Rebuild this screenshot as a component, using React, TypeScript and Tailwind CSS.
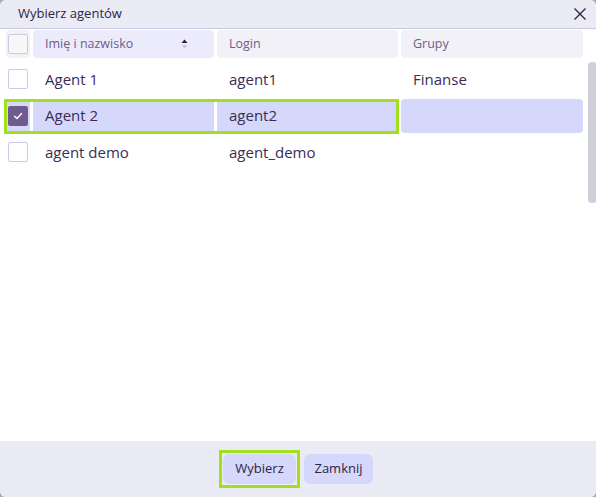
interface Agent {
  name: string;
  login: string;
  groups: string;
  selected: boolean;
}

const agents: Agent[] = [
  { name: "Agent 1", login: "agent1", groups: "Finanse", selected: false },
  { name: "Agent 2", login: "agent2", groups: "", selected: true },
  { name: "agent demo", login: "agent_demo", groups: "", selected: false },
];

function Checkbox({ checked }: { checked: boolean }) {
  return checked ? (
    <div className="w-5 h-5 rounded-[2px] bg-[#6f5b8c] flex items-center justify-center">
      <svg width="12" height="12" viewBox="0 0 12 12" fill="none">
        <path d="M2.5 6.2 L5 8.5 L9.5 3.5" stroke="#fff" strokeWidth="1.4" strokeLinecap="round" strokeLinejoin="round" />
      </svg>
    </div>
  ) : (
    <div className="w-5 h-5 rounded-[2px] border border-[#cdcbe3] bg-white" />
  );
}

export default function App() {
  return (
    <div className="w-[596px] h-[497px] bg-[#a9a9b3] font-['Open_Sans',sans-serif]">
      <div className="w-full h-full rounded-[6px] overflow-hidden bg-white flex flex-col">
        {/* Title bar */}
        <div className="h-[29px] shrink-0 bg-[#ebebf6] border-b border-[#c9c8e2] flex items-center justify-between pl-[18px] pr-[6px]">
          <span className="text-[13px] text-[#2e2448]">Wybierz agentów</span>
          <button className="w-5 h-5 flex items-center justify-center text-[#2e2448]" aria-label="Zamknij">
            <svg width="14" height="14" viewBox="0 0 14 14" fill="none">
              <path d="M1.5 1.5 L12.5 12.5 M12.5 1.5 L1.5 12.5" stroke="currentColor" strokeWidth="1.4" />
            </svg>
          </button>
        </div>

        {/* Table */}
        <div className="flex-1 flex relative">
          <div className="flex-1 pl-[6px] pt-[1px]">
            <div className="grid grid-cols-[24px_181px_181px_182px] gap-x-[3px] h-[28px]">
              <div className="rounded-[4px] bg-[#f2f1f6] flex items-center justify-center">
                <div className="w-5 h-5 rounded-[2px] border border-[#cdcbe3] bg-[#f7f7f9]" />
              </div>
              <div className="rounded-[4px] bg-[#ebebfb] flex items-center justify-between pl-3 pr-[26px] text-[12.5px] font-medium text-[#6d5e88]">
                <span>Imię i nazwisko</span>
                <svg width="7" height="10" viewBox="0 0 7 10">
                  <path d="M3.5 0.5 L6.5 4 L0.5 4 Z" fill="#2b1d49" />
                  <path d="M0.5 6 L6.5 6 L3.5 9.5 Z" fill="#c9c8d6" />
                </svg>
              </div>
              <div className="rounded-[4px] bg-[#f2f1f7] flex items-center pl-3 text-[12.5px] font-medium text-[#6d5e88]">
                Login
              </div>
              <div className="rounded-[4px] bg-[#f2f1f7] flex items-center pl-3 text-[12.5px] font-medium text-[#6d5e88]">
                Grupy
              </div>
            </div>

            <div className="mt-[4px] flex flex-col gap-[2.5px]">
              {agents.map((a) => (
                <div key={a.login} className="relative grid grid-cols-[24px_181px_181px_182px] gap-x-[3px] h-[34px] text-[15px] text-[#3a2c57]">
                  <div className={`rounded-[4px] flex items-center justify-center ${a.selected ? "bg-[#d5d8fa]" : ""}`}>
                    <Checkbox checked={a.selected} />
                  </div>
                  <div className={`rounded-[4px] flex items-center pl-3 ${a.selected ? "bg-[#d5d8fa]" : ""}`}>{a.name}</div>
                  <div className={`rounded-[4px] flex items-center pl-3 ${a.selected ? "bg-[#d5d8fa]" : ""}`}>{a.login}</div>
                  <div className={`rounded-[4px] flex items-center pl-3 ${a.selected ? "bg-[#d5d8fa]" : ""}`}>{a.groups}</div>
                  {a.selected && (
                    <div className="absolute left-[-2px] top-0 w-[395px] h-[35px] border-[3px] border-[#a3e01c] pointer-events-none" />
                  )}
                </div>
              ))}
            </div>
          </div>
          {/* scrollbar */}
          <div className="w-[14px] shrink-0 pt-[33px] pl-[5px]">
            <div className="w-[9px] h-[141px] rounded-[4px] bg-[#cfcfd9]" />
          </div>
        </div>

        {/* Footer */}
        <div className="h-[56px] shrink-0 bg-[#ebebf6] flex items-center justify-center gap-2">
          <div className="border-[3px] border-[#a3e01c] p-px -m-[4px]">
            <button className="h-[30px] w-[73px] rounded-[6px] bg-[#d5d8fa] text-[13px] text-[#2e2448] block">
              Wybierz
            </button>
          </div>
          <button className="h-[30px] w-[69px] rounded-[6px] bg-[#d5d8fa] text-[13px] text-[#2e2448]">
            Zamknij
          </button>
        </div>
      </div>
    </div>
  );
}
